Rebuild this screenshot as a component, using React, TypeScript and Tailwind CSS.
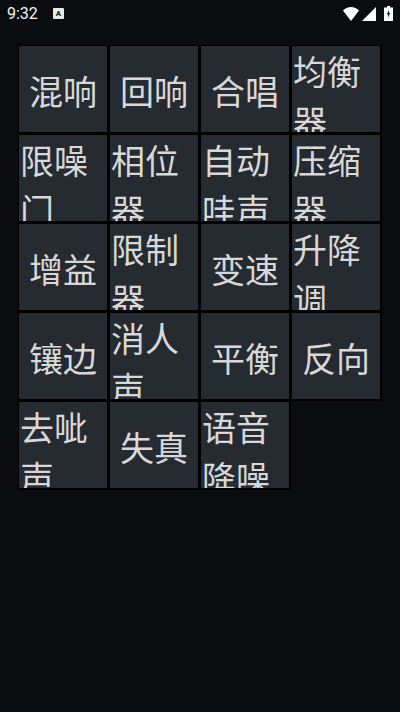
const effects = [
  "混响", "回响", "合唱", "均衡器",
  "限噪门", "相位器", "自动哇声", "压缩器",
  "增益", "限制器", "变速", "升降调",
  "镶边", "消人声", "平衡", "反向",
  "去呲声", "失真", "语音降噪",
];

function StatusBar() {
  return (
    <div className="flex h-[27px] items-center justify-between pl-[7px] pr-[7px] text-white">
      <div className="flex items-center">
        <span className="font-['Roboto',sans-serif] text-[16px] leading-none text-[#f4f4f4]">9:32</span>
        <div className="ml-[15px] flex h-[11px] w-[11px] items-center justify-center rounded-[1px] bg-[#e8e8e8]">
          <span className="font-['Roboto',sans-serif] text-[8px] font-bold leading-none text-[#111]">A</span>
        </div>
      </div>
      <div className="flex items-center">
        <svg width="16" height="14" viewBox="0 0 16 14">
          <path d="M0 3.6C2.100 1.400 5 0 8 0S13.900 1.400 16 3.600L8 14Z" fill="#fff" />
        </svg>
        <svg width="14" height="14" viewBox="0 0 14 14" className="ml-[3px]">
          <path d="M14 0V14H0Z" fill="#fff" />
        </svg>
        <svg width="9" height="15" viewBox="0 0 9 15" className="ml-[8px]">
          <path d="M3 0H6V1.500H9V15H0V1.500H3Z" fill="#fff" />
          <path d="M5.200 3.500L2.800 8.500H4.300L3.800 12L6.300 7H4.800Z" fill="#0a0c0f" />
        </svg>
      </div>
    </div>
  );
}

export default function App() {
  return (
    <div className="h-[712px] w-[400px] overflow-hidden bg-[#0a0c0f] font-['Noto_Sans_CJK_SC',sans-serif]">
      <StatusBar />
      <div className="grid grid-cols-[repeat(4,91px)] auto-rows-[89px] pl-[18px] pt-[18px]">
        {effects.map((name) => (
          <div
            key={name}
            className={
              name.length > 2
                ? "overflow-hidden border border-r-2 border-b-2 border-black bg-[#262a31] pl-[1px] text-[34px] leading-[50px] text-[#d8d8d8]"
                : "flex items-center justify-center overflow-hidden border border-r-2 border-b-2 border-black bg-[#262a31] pt-[3px] text-[34px] leading-[50px] text-[#d8d8d8]"
            }
          >
            {name}
          </div>
        ))}
      </div>
    </div>
  );
}
